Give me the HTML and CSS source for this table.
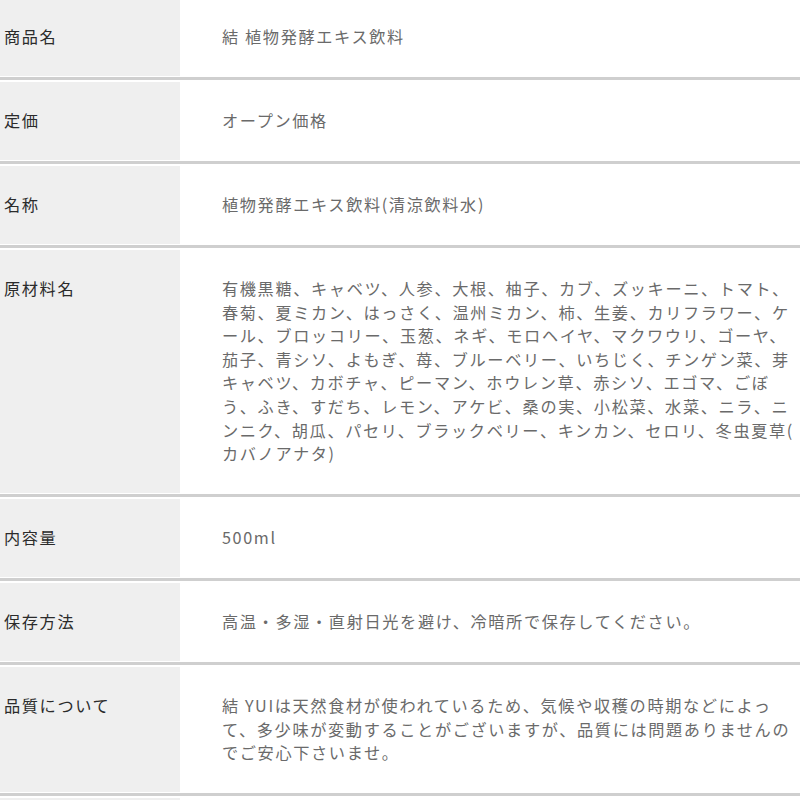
FILE: index.html
```html
<!DOCTYPE html>
<html lang="ja">
<head>
    <meta charset="UTF-8">
    <meta name="viewport" content="width=device-width, initial-scale=1.0">
    <title>商品情報</title>
    <link rel="stylesheet" href="styles.css">
</head>
<body>

<div class="spec">
    <div class="spec-row">
        <div class="spec-label">商品名</div>
        <div class="spec-value">結 植物発酵エキス飲料</div>
    </div>
    <div class="spec-row">
        <div class="spec-label">定価</div>
        <div class="spec-value">オープン価格</div>
    </div>
    <div class="spec-row">
        <div class="spec-label">名称</div>
        <div class="spec-value">植物発酵エキス飲料(清涼飲料水)</div>
    </div>
    <div class="spec-row">
        <div class="spec-label">原材料名</div>
        <div class="spec-value">有機黒糖、キャベツ、人参、大根、柚子、カブ、ズッキーニ、トマト、春菊、夏ミカン、はっさく、温州ミカン、柿、生姜、カリフラワー、ケール、ブロッコリー、玉葱、ネギ、モロヘイヤ、マクワウリ、ゴーヤ、茄子、青シソ、よもぎ、苺、ブルーベリー、いちじく、チンゲン菜、芽キャベツ、カボチャ、ピーマン、ホウレン草、赤シソ、エゴマ、ごぼう、ふき、すだち、レモン、アケビ、桑の実、小松菜、水菜、ニラ、ニンニク、胡瓜、パセリ、ブラックベリー、キンカン、セロリ、冬虫夏草(<wbr>カバノアナタ)</div>
    </div>
    <div class="spec-row">
        <div class="spec-label">内容量</div>
        <div class="spec-value">500ml</div>
    </div>
    <div class="spec-row">
        <div class="spec-label">保存方法</div>
        <div class="spec-value">高温・多湿・直射日光を避け、冷暗所で保存してください。</div>
    </div>
    <div class="spec-row">
        <div class="spec-label">品質について</div>
        <div class="spec-value">結 YUIは天然食材が使われているため、気候や収穫の時期などによって、多少味が変動することがございますが、品質には問題ありませんのでご安心下さいませ。</div>
    </div>
    <div class="spec-row">
        <div class="spec-label">&nbsp;</div>
        <div class="spec-value">&nbsp;</div>
    </div>
</div>

</body>
</html>
```

FILE: styles.css
```css
html, body {
    overflow: hidden;
}
body {
    margin: 0;
    padding: 0;
    background-color: #ffffff;
    font-family: "Noto Sans CJK JP", sans-serif;
    font-size: 16.2px;
    line-height: 23.6px;
    letter-spacing: 0.1em;
}
.spec {
    width: 806px;
    margin-top: -4px;
}
.spec-row {
    display: flex;
    padding: 2px 0 1px;
    border-bottom: 3px solid #cfcfcf;
}
.spec-label {
    flex: 0 0 180px;
    box-sizing: border-box;
    padding: 27.2px 4px;
    background-color: #efefef;
    color: #2b2b2b;
}
.spec-value {
    width: 582px;
    padding: 27.2px 0 27.2px 42px;
    color: #6a6a6a;
}
```
